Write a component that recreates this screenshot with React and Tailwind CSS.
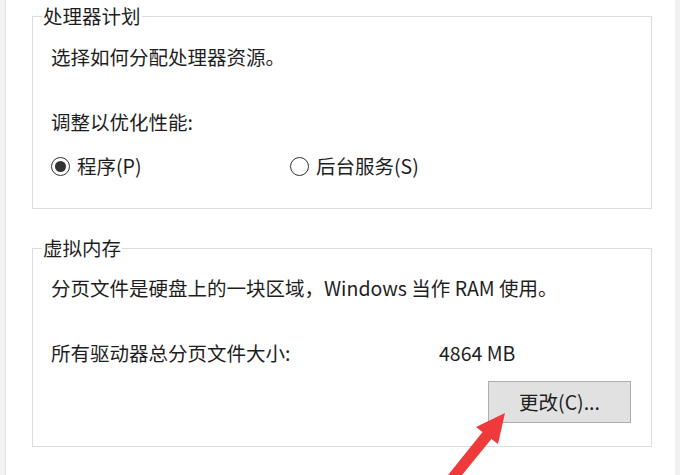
import React from 'react';

const Radio = ({ checked, label }) => (
  <label className="flex items-center h-6">
    <span className="w-[19px] h-[19px] rounded-full border border-[#333] flex items-center justify-center bg-white">
      {checked && <span className="w-[11px] h-[11px] rounded-full bg-[#333]" />}
    </span>
    <span className="ml-[7px]">{label}</span>
  </label>
);

// legend sits inside the fieldset padding, so pull it back left
const GroupBox = ({ title, className = '', children }) => (
  <fieldset className={`border border-[#dcdcdc] pl-[18px] pr-[20px] ${className}`}>
    <legend className="-ml-[9px] px-[1px] leading-6">{title}</legend>
    {children}
  </fieldset>
);

const Arrow = () => (
  <svg className="absolute left-0 top-0 pointer-events-none" width="680" height="475" viewBox="0 0 680 475">
    <polygon
      points="505,413 476,427 482.6,432.1 444,480 458,480 491.4,438.9 498,444"
      fill="#ee3a3a"
    />
  </svg>
);

export default function App() {
  return (
    <div
      className="relative w-[680px] h-[475px] overflow-hidden bg-white text-[19.5px] text-[#1e1e1e] flex"
      style={{ fontFamily: '"Noto Sans CJK SC", "Noto Sans", sans-serif' }}
    >
      <div className="w-[6px] bg-[#f3f3f3] border-r border-[#e4e4e4]" />
      <div className="flex-1 pl-[26px] pt-[4px]">
        <div className="w-[620px]">
          <GroupBox title="处理器计划" className="pb-[30px]">
            <p className="leading-6 mt-[17px]">选择如何分配处理器资源。</p>
            <p className="leading-6 mt-[41px]">调整以优化性能:</p>
            <div className="flex mt-[20px]">
              <div className="w-[239px]">
                <Radio checked label="程序(P)" />
              </div>
              <Radio label="后台服务(S)" />
            </div>
          </GroupBox>
          <GroupBox title="虚拟内存" className="mt-[27px] pb-[23px]">
            <p className="leading-6 mt-[16px]">分页文件是硬盘上的一块区域，Windows 当作 RAM 使用。</p>
            <div className="flex leading-6 mt-[41px]">
              <span className="w-[388px]">所有驱动器总分页文件大小:</span>
              <span>4864 MB</span>
            </div>
            <div className="flex justify-end mt-[16px]">
              <button className="w-[143px] h-[42px] bg-[#e1e1e1] border border-[#adadad] text-[19.5px] text-[#1e1e1e]">
                更改(C)...
              </button>
            </div>
          </GroupBox>
        </div>
      </div>
      <div className="w-[5px] bg-[#f0f0f0]" />
      <Arrow />
    </div>
  );
}
